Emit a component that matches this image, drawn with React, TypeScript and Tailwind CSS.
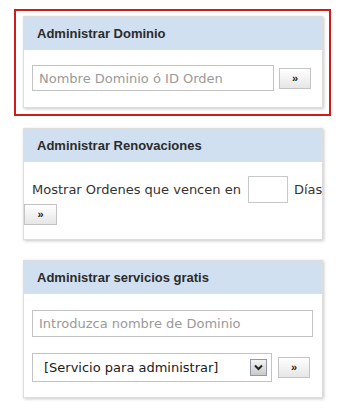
import { useState } from "react";

const font = { fontFamily: "'DejaVu Sans', Verdana, sans-serif" };

function GoButton({ className = "" }: { className?: string }) {
  return (
    <button
      type="button"
      className={
        "flex items-center justify-center w-[32px] h-[21px] border border-[#c4c4c4] bg-gradient-to-b from-white to-[#e6e6e6] text-[11px] font-bold leading-none text-[#222] font-['Liberation_Sans',Arial,sans-serif] " +
        className
      }
    >
      »
    </button>
  );
}

function Panel({ title, children }: { title: string; children: React.ReactNode }) {
  return (
    <div className="w-[300px] border border-[#dddddd] bg-white shadow-[1px_1px_3px_rgba(0,0,0,0.22)]">
      <div className="h-[33px] bg-[#d0e0f1] pl-[13px] flex items-center">
        <span className="text-[13px] font-bold text-[#2b2b2b] font-['Liberation_Sans',Arial,sans-serif]">
          {title}
        </span>
      </div>
      {children}
    </div>
  );
}

export default function App() {
  const [service, setService] = useState("[Servicio para administrar]");

  return (
    <div className="w-[339px] h-[420px] bg-white pl-[14px] pt-[9px]" style={font}>
      {/* selected block */}
      <div className="w-[317px] border-2 border-[#cf1b1b] pl-[7px] pr-[6px] pt-[5px] pb-[6px]">
        <Panel title="Administrar Dominio">
          <div className="flex items-center pl-[8px] pt-[15px] pb-[16px]">
            <input
              className="w-[242px] h-[26px] border border-[#c3c3c3] px-[6px] text-[13px] text-[#333] placeholder:text-[#9a9a9a] outline-none"
              placeholder="Nombre Dominio ó ID Orden"
            />
            <GoButton className="ml-[5px]" />
          </div>
        </Panel>
      </div>

      <div className="mt-[12px] ml-[9px]">
        <Panel title="Administrar Renovaciones">
          <div className="pt-[14px] pb-[14px]">
            <div className="flex items-center pl-[8px] text-[13px] text-[#333] whitespace-nowrap">
              <span>Mostrar Ordenes que vencen en</span>
              <input className="ml-[7px] mr-[6px] w-[40px] h-[27px] border border-[#c8c8c8] outline-none" />
              <span>Días</span>
            </div>
            <GoButton className="mt-[1px] w-[33px] h-[21px]" />
          </div>
        </Panel>
      </div>

      <div className="mt-[20px] ml-[9px]">
        <Panel title="Administrar servicios gratis">
          <div className="pl-[8px] pt-[16px] pb-[15px]">
            <input
              className="w-[281px] h-[27px] border border-[#c3c3c3] px-[6px] text-[13px] text-[#333] placeholder:text-[#9a9a9a] outline-none"
              placeholder="Introduzca nombre de Dominio"
            />
            <div className="flex items-center mt-[16px]">
              <div className="relative w-[240px] h-[29px] border border-[#c3c3c3] flex items-center pl-[11px] text-[13px] text-[#1a1a1a]">
                <span>{service}</span>
                <button
                  type="button"
                  onClick={() => setService("[Servicio para administrar]")}
                  className="absolute right-[4px] top-[5px] w-[17px] h-[17px] border border-[#8f9aa6] bg-gradient-to-b from-[#f4f4f4] to-[#c9c9c9] flex items-center justify-center"
                >
                  <svg width="9" height="7" viewBox="0 0 9 7">
                    <path d="M1 1.5 L4.5 5 L8 1.5" fill="none" stroke="#222" strokeWidth="2" />
                  </svg>
                </button>
              </div>
              <GoButton className="ml-[6px] h-[20px]" />
            </div>
          </div>
        </Panel>
      </div>
    </div>
  );
}
